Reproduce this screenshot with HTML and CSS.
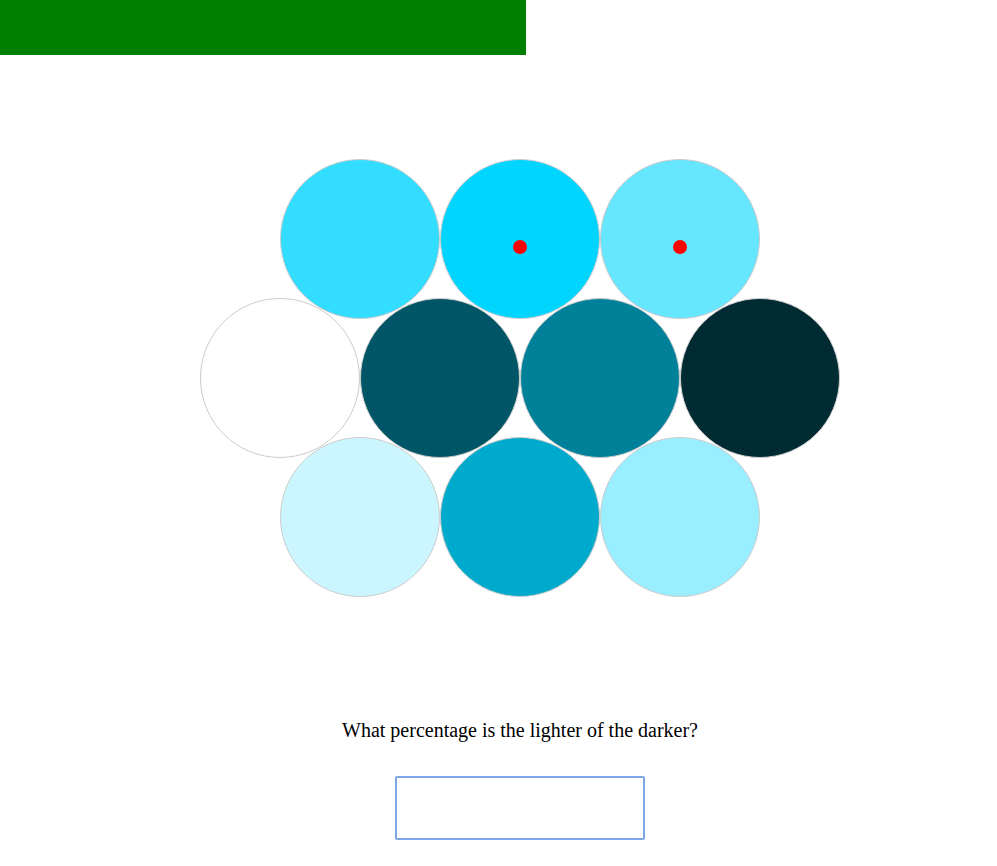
FILE: index.html
```html
<!DOCTYPE html>
<html>
<head>
<meta charset="utf-8">
<link rel="stylesheet" href="styles.css">
</head>
<body>
<div class="progress"></div>
<div class="board">
  <div class="row row-short">
    <div class="cell c1"></div>
    <div class="cell c2"><span class="dot"></span></div>
    <div class="cell c3"><span class="dot"></span></div>
  </div>
  <div class="row">
    <div class="cell c4"></div>
    <div class="cell c5"></div>
    <div class="cell c6"></div>
    <div class="cell c7"></div>
  </div>
  <div class="row row-short">
    <div class="cell c8"></div>
    <div class="cell c9"></div>
    <div class="cell c10"></div>
  </div>
  <p class="question">What percentage is the lighter of the darker?</p>
  <input class="answer" type="text" autofocus>
</div>
</body>
</html>
```
FILE: styles.css
```css
html, body {
  margin: 0;
  padding: 0;
  background: #ffffff;
}
body {
  font-family: "Liberation Serif", "Times New Roman", serif;
  color: #000;
}
.progress {
  width: 526px;
  height: 55px;
  background: #008000;
}
.board {
  width: 640px;
  margin-left: 200px;
  padding-top: 104px;
  display: flex;
  flex-direction: column;
  align-items: center;
}
.row {
  display: flex;
  width: 640px;
}
.row + .row {
  margin-top: -21px;
}
.row-short {
  padding-left: 80px;
  box-sizing: border-box;
}
.cell {
  position: relative;
  width: 160px;
  height: 160px;
  box-sizing: border-box;
  border: 1px solid #cccccc;
  border-radius: 50%;
  flex: none;
}
.dot {
  position: absolute;
  left: 72px;
  top: 80px;
  width: 14px;
  height: 14px;
  border-radius: 50%;
  background: #ff0000;
}
.c1 { background: #33ddff; }
.c2 { background: #00d5ff; }
.c3 { background: #66e6ff; }
.c4 { background: #ffffff; }
.c5 { background: #005566; }
.c6 { background: #008099; }
.c7 { background: #002b33; }
.c8 { background: #ccf6ff; }
.c9 { background: #00aacc; }
.c10 { background: #99eeff; }
.question {
  margin: 122px 0 0 0;
  font-size: 20px;
  line-height: 23px;
  text-align: center;
}
.answer {
  margin-top: 34px;
  width: 250px;
  height: 64px;
  box-sizing: border-box;
  border: 2px solid #7ea6e6;
  border-radius: 2px;
  outline: none;
  font-size: 40px;
  font-family: "Liberation Serif", serif;
  padding: 0 2px;
  background: #fff;
}
```
